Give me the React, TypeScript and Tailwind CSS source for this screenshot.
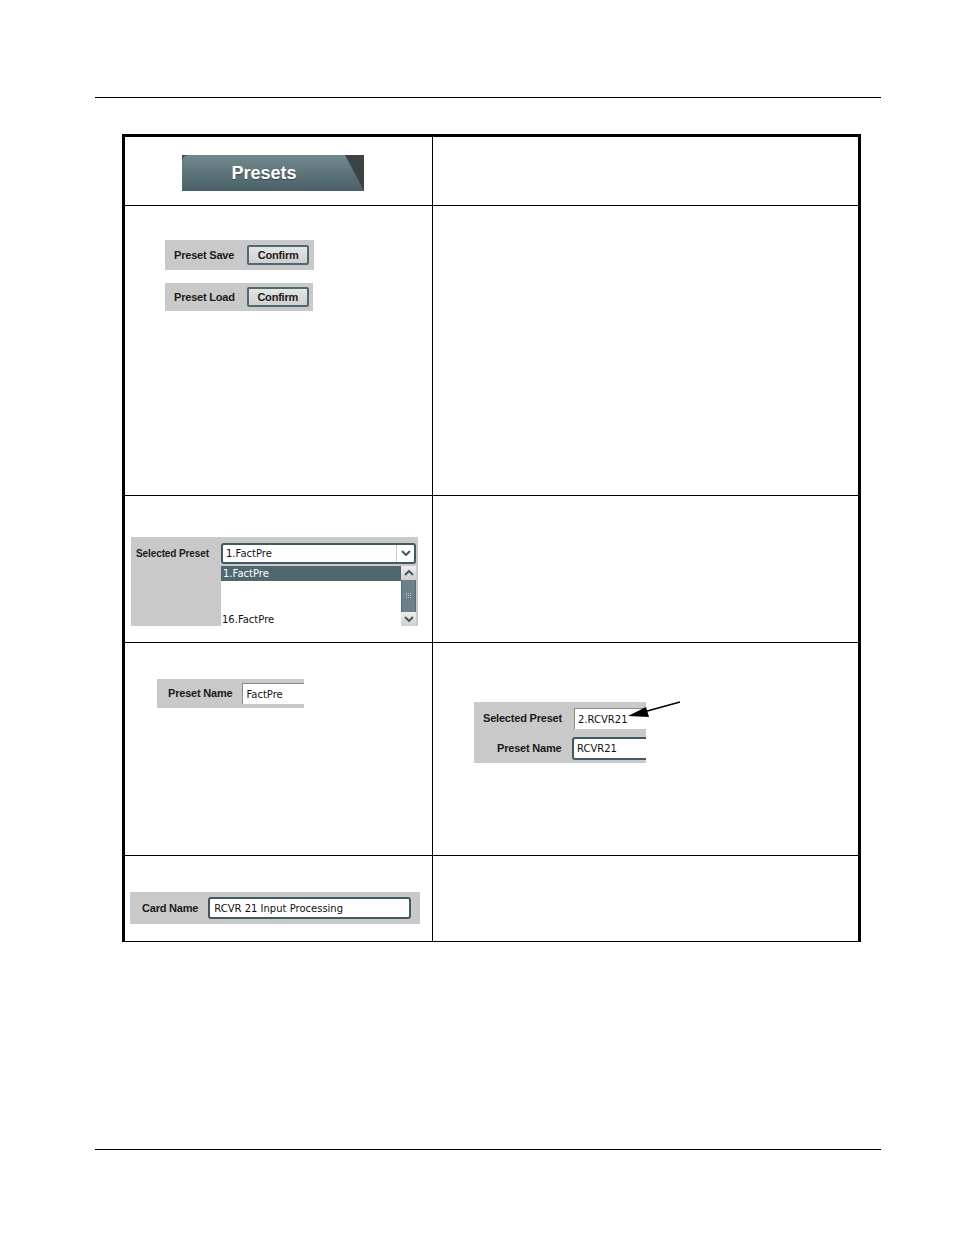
import React from 'react';

const LABEL = "text-[11px] font-bold text-[#1a1a1a] tracking-[-0.2px] [font-family:'Liberation_Sans',Arial,sans-serif]";
const FIELD = "text-[10px] text-[#111] [font-family:'DejaVu_Sans','Liberation_Sans',sans-serif]";

function ConfirmButton() {
  return (
    <div className="w-[62px] h-[20px] rounded-[2px] border-2 border-[#4d6972] bg-gradient-to-b from-[#e6e6e6] to-[#cfcfcf] flex items-center justify-center">
      <span className={LABEL}>Confirm</span>
    </div>
  );
}

function Chevron({ up = false }: { up?: boolean }) {
  return (
    <svg width="10" height="6" viewBox="0 0 10 6" className={up ? 'rotate-180' : ''}>
      <path d="M1 1 L5 5 L9 1" fill="none" stroke="#3f5a62" strokeWidth="2" />
    </svg>
  );
}

function PresetsTab() {
  return (
    <div className="w-[182px] h-[36px] bg-[#3c4246] relative">
      <div className="absolute inset-0 rounded-tl-[6px] bg-gradient-to-b from-[#72898f] to-[#4a6067] [clip-path:polygon(0_0,163px_0,182px_36px,0_36px)] flex items-center justify-center pr-[18px]">
        <span className="text-[18px] font-bold text-white [font-family:'Liberation_Sans',Arial,sans-serif] [text-shadow:0_1px_1px_rgba(0,0,0,0.4)]">
          Presets
        </span>
      </div>
    </div>
  );
}

function SelectedPresetList() {
  return (
    <div className="w-[287px] h-[89px] bg-[#c9c9c9] flex pt-[6px]">
      <div className="w-[90px] pl-[5px] h-[21px] flex items-center">
        <span className={LABEL + ' !text-[10px] !tracking-[-0.1px]'}>Selected Preset</span>
      </div>
      <div className="flex flex-col w-[195px]">
        <div className="h-[21px] rounded-[3px] border-2 border-[#3f5a62] bg-white flex items-center">
          <span className={FIELD + ' pl-[3px] flex-1'}>1.FactPre</span>
          <div className="w-[18px] h-full border-l border-[#c8c8c8] flex items-center justify-center">
            <Chevron />
          </div>
        </div>
        <div className="flex h-[62px] bg-white mt-[2px]">
          <div className="flex-1 flex flex-col justify-between">
            <div className="h-[15px] bg-[#4f6870] flex items-center">
              <span className={FIELD + ' !text-white pl-[2px]'}>1.FactPre</span>
            </div>
            <span className={FIELD + ' pl-[1px] leading-[12px]'}>16.FactPre</span>
          </div>
          <div className="w-[15px] flex flex-col bg-[#c4c4c4]">
            <div className="h-[14px] bg-gradient-to-b from-[#eeeeee] to-[#cfcfcf] flex items-center justify-center">
              <Chevron up />
            </div>
            <div className="flex-1 bg-[#6b8089] border-x border-[#566b73] flex items-center justify-center">
              <div className="grid grid-cols-3 gap-[1px]">
                {Array.from({ length: 9 }).map((_, i) => (
                  <div key={i} className="w-[1px] h-[1px] bg-[#b7c4c8]" />
                ))}
              </div>
            </div>
            <div className="h-[14px] bg-gradient-to-b from-[#eeeeee] to-[#cfcfcf] flex items-center justify-center">
              <Chevron />
            </div>
          </div>
        </div>
      </div>
    </div>
  );
}

export default function App() {
  return (
    <div className="w-[954px] h-[1235px] bg-white relative">
      <div className="pt-[97px]">
        <div className="ml-[95px] w-[786px] border-t border-black" />
      </div>

      <div className="ml-[122px] mt-[36px] w-[739px] border-l-[3px] border-t-[3px] border-r-[3px] border-b border-black">
        {/* Row 1 */}
        <div className="flex h-[69px] border-b border-black">
          <div className="w-[308px] border-r border-black pl-[57px] pt-[18px]">
            <PresetsTab />
          </div>
          <div className="flex-1" />
        </div>

        {/* Row 2 */}
        <div className="flex h-[290px] border-b border-black">
          <div className="w-[308px] border-r border-black pl-[40px] pt-[34px] flex flex-col gap-[13px]">
            <div className="w-[149px] h-[30px] bg-[#c9c9c9] flex items-center pl-[9px] gap-[13px]">
              <span className={LABEL}>Preset Save</span>
              <ConfirmButton />
            </div>
            <div className="w-[148px] h-[28px] bg-[#c9c9c9] flex items-center pl-[9px] gap-[12px]">
              <span className={LABEL}>Preset Load</span>
              <ConfirmButton />
            </div>
          </div>
          <div className="flex-1" />
        </div>

        {/* Row 3 */}
        <div className="flex h-[147px] border-b border-black">
          <div className="w-[308px] border-r border-black pl-[6px] pt-[41px]">
            <SelectedPresetList />
          </div>
          <div className="flex-1" />
        </div>

        {/* Row 4 */}
        <div className="flex h-[213px] border-b border-black">
          <div className="w-[308px] border-r border-black pl-[32px] pt-[36px]">
            <div className="w-[147px] h-[29px] bg-[#c9c9c9] flex items-center pl-[11px] gap-[10px]">
              <span className={LABEL}>Preset Name</span>
              <div className="flex-1 h-[21px] bg-white border-l border-t border-[#8a8a8a] flex items-center">
                <span className={FIELD + ' pl-[3px]'}>FactPre</span>
              </div>
            </div>
          </div>
          <div className="flex-1 pl-[41px] pt-[59px]">
            <div className="relative w-[172px] h-[61px] bg-[#c9c9c9] flex flex-col pt-[6px] gap-[8px]">
              <div className="flex items-center h-[21px]">
                <span className={LABEL + ' pl-[9px] w-[100px]'}>Selected Preset</span>
                <div className="flex-1 h-[21px] bg-white border-l border-t border-[#8a8a8a] flex items-center">
                  <span className={FIELD + ' pl-[3px]'}>2.RCVR21</span>
                </div>
              </div>
              <div className="flex items-center h-[23px]">
                <span className={LABEL + ' pl-[23px] w-[98px]'}>Preset Name</span>
                <div className="flex-1 h-[23px] bg-white rounded-l-[3px] border-l-2 border-y-2 border-[#3f5a62] flex items-center">
                  <span className={FIELD + ' pl-[3px]'}>RCVR21</span>
                </div>
              </div>
              <svg className="absolute left-[152px] top-[-2px]" width="60" height="20" viewBox="0 0 60 20">
                <line x1="54" y1="2" x2="14" y2="13" stroke="black" strokeWidth="1.5" />
                <polygon points="2,16 20,7 23,17" fill="black" />
              </svg>
            </div>
          </div>
        </div>

        {/* Row 5 */}
        <div className="flex h-[85px]">
          <div className="w-[308px] border-r border-black pl-[5px] pt-[36px]">
            <div className="w-[290px] h-[32px] bg-[#c9c9c9] flex items-center pl-[12px] gap-[10px]">
              <span className={LABEL}>Card Name</span>
              <div className="w-[203px] h-[22px] rounded-[3px] border-2 border-[#3f5a62] bg-white flex items-center">
                <span className={FIELD + ' pl-[4px]'}>RCVR 21 Input Processing</span>
              </div>
            </div>
          </div>
          <div className="flex-1" />
        </div>
      </div>

      <div className="absolute left-[95px] top-[1149px] w-[786px] border-t border-black" />
    </div>
  );
}
